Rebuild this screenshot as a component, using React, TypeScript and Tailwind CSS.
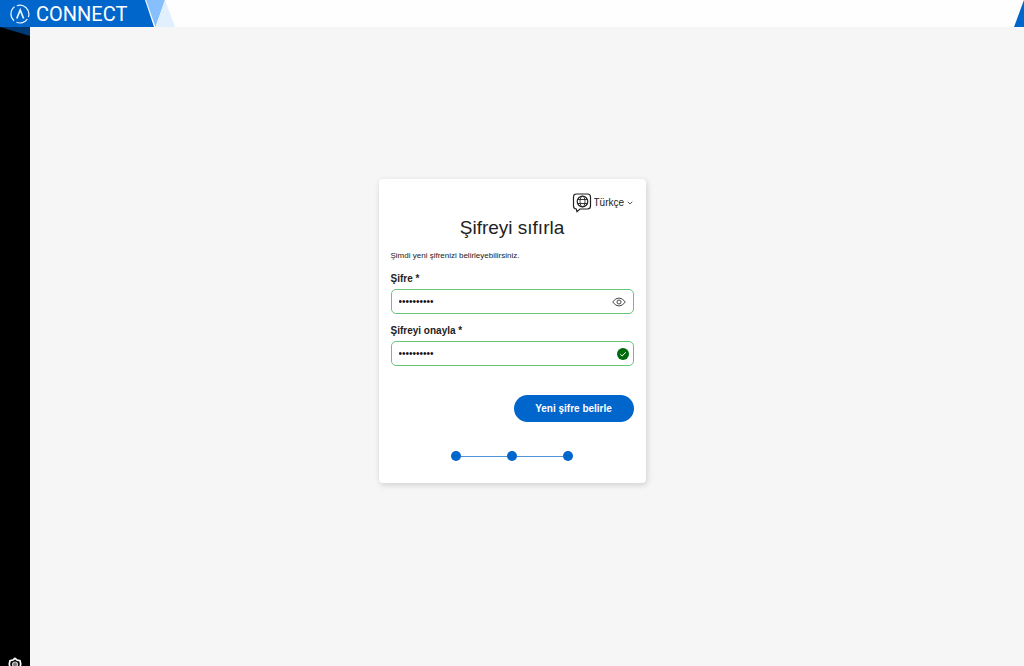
import { ChevronDown } from "lucide-react";

function BrandMark() {
  return (
    <svg className="h-5 w-5 shrink-0" viewBox="0 0 20 20" fill="none" stroke="#eaf6ff" aria-hidden="true">
      <path d="M4.500 2.800A9 9 0 0 0 4 16.700M6.500 18.300A9 9 0 0 0 17.300 15.200M18.400 13A9 9 0 0 0 6.800 1.700" strokeWidth="1.200" />
      <path d="M6.800 14.500L10.200 6L13.600 14.500" strokeWidth="1.700" />
    </svg>
  );
}

function Header() {
  return (
    <header className="flex h-[27px] bg-[#fefefe]">
      <div className="flex h-full items-center gap-[6px] bg-[#0066cc] pl-[10px]">
        <BrandMark />
        <span className="w-[108px] font-['Roboto',sans-serif] text-[20px] leading-[26px] text-white">CONNECT</span>
      </div>
      <svg className="h-full w-8" viewBox="0 0 32 27" aria-hidden="true">
        <path d="M0 0H1L10 27H0Z" fill="#0066cc" />
        <path d="M2 0H21L11.500 27Z" fill="#86bffc" />
        <path d="M21 0L31 27H11.500Z" fill="#e0f0ff" />
      </svg>
      <svg className="ml-auto h-full w-[10px]" viewBox="0 0 10 27" aria-hidden="true">
        <path d="M10 0V27H0Z" fill="#0066cc" />
      </svg>
    </header>
  );
}

function Sidebar() {
  return (
    <aside className="flex w-[30px] shrink-0 flex-col justify-between overflow-hidden bg-black">
      <svg className="h-[9px] w-full" viewBox="0 0 30 9" aria-hidden="true">
        <path d="M0 0H30V9Z" fill="#003a75" />
      </svg>
      <button type="button" aria-label="Ayarlar" className="flex h-[9px] justify-center overflow-hidden">
        <svg className="h-[14px] w-[14px] shrink-0" viewBox="0 0 14 14" fill="none" stroke="#fff" aria-hidden="true">
          <path d="M7 1.300L9 3L12 3.800L12.700 7L12 10.500L9 12L7 13L5 12L2 10.500L1.300 7L2 3.800L5 3Z" strokeWidth="1.700" />
          <circle cx="7" cy="7.500" r="2.500" fill="#777" stroke="#ccc" strokeWidth="1.200" />
        </svg>
      </button>
    </aside>
  );
}

function GlobeBubble() {
  return (
    <svg className="h-5 w-5" viewBox="0 0 20 20" fill="none" stroke="#222" aria-hidden="true">
      <path d="M4.500 1H15.500Q18.500 1 18.500 4V13Q18.500 16 15.500 16H8L5 18.700L4.300 16Q1.500 15.700 1.500 13V4Q1.500 1 4.500 1Z" strokeWidth="1.200" />
      <circle cx="10.500" cy="8.500" r="5.300" strokeWidth="1.200" />
      <ellipse cx="10.500" cy="8.500" rx="2.500" ry="5.300" strokeWidth=".9" />
      <path d="M5.700 6.500H15.300M5.700 10.500H15.300" strokeWidth=".9" />
    </svg>
  );
}

function EyeIcon() {
  return (
    <svg className="h-[10px] w-[14px]" viewBox="0 0 14 10" fill="none" stroke="#444" aria-hidden="true">
      <path d="M.7 5Q3.500 1 7 1T13.300 5Q10.500 9 7 9T.7 5Z" />
      <circle cx="7" cy="5" r="2" />
    </svg>
  );
}

function CheckBadge() {
  return (
    <svg className="h-3 w-3" viewBox="0 0 12 12" role="img" aria-label="Şifreler eşleşiyor">
      <circle cx="6" cy="6" r="6" fill="#006b0b" />
      <path d="M3.300 6.200L5.200 8L8.700 4.300" fill="none" stroke="#fff" />
    </svg>
  );
}

const fieldClass =
  "block h-[25px] w-full rounded-[5px] border border-[#62c878] bg-white px-[7px] text-[10px] text-[#111] outline-none";
const labelClass = "block text-[10px] leading-3 font-bold text-[#222]";

function ResetCard() {
  return (
    <form
      className="w-[267px] rounded-[4px] bg-white px-3 pt-[14px] pb-[22px] shadow-[1px_2px_6px_rgba(0,0,0,0.16)]"
      onSubmit={(e) => e.preventDefault()}
    >
      <div className="flex h-5 items-center justify-end">
        <label htmlFor="language" aria-label="Dil">
          <GlobeBubble />
        </label>
        <div className="relative ml-[2px]">
          <select id="language" className="block appearance-none bg-transparent pr-[9px] text-[10px] leading-3 text-[#222] outline-none">
            <option>Türkçe</option>
          </select>
          <ChevronDown className="pointer-events-none absolute top-0.5 right-0 h-2 w-2 text-[#333]" strokeWidth={2.5} />
        </div>
      </div>
      <h1 className="mt-px text-center text-[19px] leading-7 text-[#222]">Şifreyi sıfırla</h1>
      <p className="mt-2 text-[8px] leading-3 text-[#222]">Şimdi yeni şifrenizi belirleyebilirsiniz.</p>
      <div className="mt-[11px]">
        <label htmlFor="password" className={labelClass}>Şifre *</label>
        <div className="relative mt-1">
          <input id="password" type="password" defaultValue="aaaaaaaaaa" className={fieldClass} />
          <button type="button" aria-label="Şifreyi göster" className="absolute inset-y-0 right-2 flex items-center">
            <EyeIcon />
          </button>
        </div>
      </div>
      <div className="mt-[11px]">
        <label htmlFor="confirm" className={labelClass}>Şifreyi onayla *</label>
        <div className="relative mt-1">
          <input id="confirm" type="password" defaultValue="aaaaaaaaaa" className={fieldClass} />
          <span className="absolute inset-y-0 right-[5px] flex items-center">
            <CheckBadge />
          </span>
        </div>
      </div>
      <div className="mt-[29px] flex justify-end">
        <button type="submit" className="h-[27px] w-[120px] rounded-full bg-[#0066cc] text-[10px] font-bold text-white">
          Yeni şifre belirle
        </button>
      </div>
      <div className="mt-[29px] flex items-center justify-center">
        <span className="h-[10px] w-[10px] rounded-full bg-[#0066cc]" />
        <span className="h-px w-[46px] bg-[#4d94db]" />
        <span className="h-[10px] w-[10px] rounded-full bg-[#0066cc]" />
        <span className="h-px w-[46px] bg-[#4d94db]" />
        <span className="h-[10px] w-[10px] rounded-full bg-[#0066cc]" />
      </div>
    </form>
  );
}

export default function App() {
  return (
    <div className="flex min-h-screen flex-col font-['Liberation_Sans',Arial,sans-serif]">
      <Header />
      <div className="flex flex-1">
        <Sidebar />
        <main className="flex flex-1 items-center justify-center bg-[#f6f6f6] pr-[30px] pb-[31px]">
          <ResetCard />
        </main>
      </div>
    </div>
  );
}
